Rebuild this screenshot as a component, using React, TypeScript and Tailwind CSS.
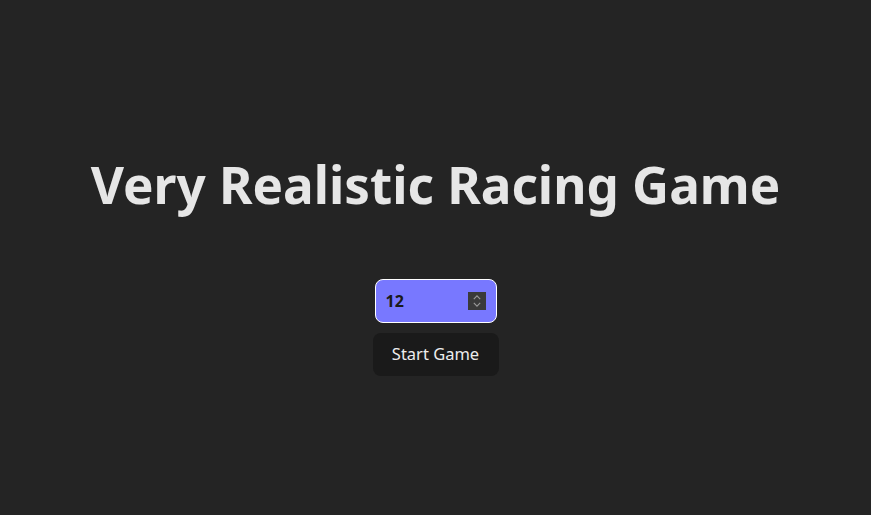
import { useState } from 'react'

export default function App() {
  const [laps, setLaps] = useState(12)

  return (
    <div
      className="min-h-screen w-full bg-[#242424] flex flex-col items-center text-[rgba(255,255,255,0.87)]"
      style={{ fontFamily: '"Noto Sans", "Open Sans", sans-serif' }}
    >
      <h1 className="mt-[156px] text-[51.2px] leading-[1.1] font-bold text-[#e6e6e6]">
        Very Realistic Racing Game
      </h1>

      {/* Lap count */}
      <div className="mt-[67px] w-[122px] h-[44px] rounded-[8px] border border-white bg-[#7878ff] flex items-center pl-[10px] pr-[10px]">
        <span className="flex-1 text-[16px] font-bold text-[#1a1a1a]">{laps}</span>
        <div className="w-[18px] h-[18px] bg-[#3a3a3a] flex flex-col items-center justify-center">
          <button onClick={() => setLaps(laps + 1)} aria-label="More laps">
            <svg viewBox="0 0 10 6" className="w-[8px] h-[5px]">
              <path d="M1 5 L5 1 L9 5" fill="none" stroke="#9a9a9a" strokeWidth="1.4" />
            </svg>
          </button>
          <button onClick={() => setLaps(Math.max(1, laps - 1))} aria-label="Fewer laps" className="mt-[2px]">
            <svg viewBox="0 0 10 6" className="w-[8px] h-[5px]">
              <path d="M1 1 L5 5 L9 1" fill="none" stroke="#9a9a9a" strokeWidth="1.4" />
            </svg>
          </button>
        </div>
      </div>

      <button className="mt-[10px] h-[43px] w-[126px] rounded-[8px] bg-[#1a1a1a] text-[16.5px] font-[450] leading-[1.5] text-[#ededed]">
        Start Game
      </button>
    </div>
  )
}
